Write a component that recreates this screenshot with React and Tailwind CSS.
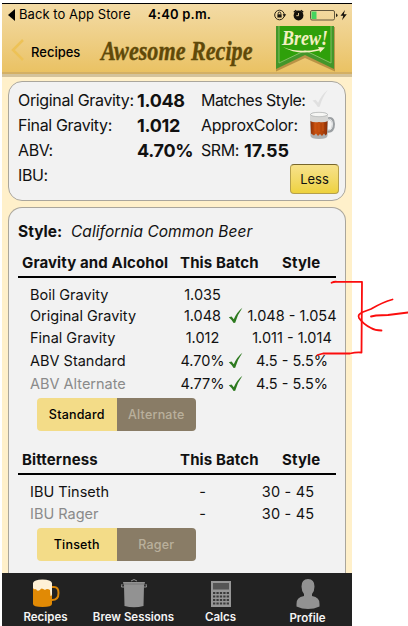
import React, { useState } from "react";

const gravityRows = [
  { name: "Boil Gravity", batch: "1.035", style: "", height: "h-[21px]" },
  { name: "Original Gravity", batch: "1.048", style: "1.048 - 1.054", check: true, height: "h-[21px]" },
  { name: "Final Gravity", batch: "1.012", style: "1.011 - 1.014", height: "h-[23px]" },
  { name: "ABV Standard", batch: "4.70%", style: "4.5 - 5.5%", check: true, height: "h-[23px]" },
  { name: "ABV Alternate", batch: "4.77%", style: "4.5 - 5.5%", check: true, muted: true, height: "h-[23px]" },
];

const bitternessRows = [
  { name: "IBU Tinseth", batch: "-", style: "30 - 45", narrow: true, height: "h-[22px]" },
  { name: "IBU Rager", batch: "-", style: "30 - 45", narrow: true, muted: true, height: "h-[21px]" },
];

const CheckMark = ({ className }) => (
  <svg viewBox="0 0 15 17" className={className} fill="currentColor">
    <path d="M0.8 10.2 L3.6 9.6 L5.8 12.2 Q9 5 14.4 0.8 Q9.500 7.500 7.200 15.800 L5.600 16 Q3.300 12.200 0.800 10.200Z" />
  </svg>
);

const BeerMug = () => (
  <svg viewBox="0 0 26 29" className="h-[29px] w-[26px]">
    <defs>
      <linearGradient id="beer" x1="0" x2="1" y1="0" y2="0">
        <stop offset="0" stopColor="#8f3208" />
        <stop offset="0.3" stopColor="#c9510f" />
        <stop offset="0.7" stopColor="#b2430a" />
        <stop offset="1" stopColor="#8a2f08" />
      </linearGradient>
    </defs>
    <path d="M18 8 Q24.500 6 24.500 13 Q24.500 21.500 18 20" fill="none" stroke="#9b9fa2" strokeWidth="3" />
    <path d="M18 8.500 Q23.500 7 23.500 13 Q23.500 20 18 19" fill="none" stroke="#e3e5e6" strokeWidth="1" />
    <path d="M1 3 L1.500 25 Q2 28 10 28 Q18 28 18.500 25 L19 3Z" fill="#aeb1b2" />
    <path d="M1.500 10 H18.500 L18 23 L16.500 24.500 L15 22.500 L13 25 L11 23 L9 25 L7 22.500 L5 24.500 L2 22.500Z" fill="url(#beer)" />
    <path d="M6 12 V20 M10 12 V21 M14 12 V20" stroke="#cf5a18" strokeWidth="0.8" />
    <path d="M1 4 Q1 1 10 1 Q19 1 19 4 V10 Q15 12 10 11 Q5 12 1 10Z" fill="#d6d6d4" />
    <ellipse cx="10" cy="3.500" rx="8.500" ry="2.200" fill="#f6f6f4" stroke="#a5a7a7" strokeWidth="0.600" />
  </svg>
);

const StatusIcons = () => (
  <svg viewBox="0 0 76 14" className="h-[14px] w-[76px]" fill="none">
    {/* rotation lock */}
    <circle cx="6.500" cy="7" r="4.800" stroke="#2b2415" strokeWidth="1" />
    <path d="M9.600 6.300 H13.200 L11.400 9Z" fill="#1b1710" />
    <rect x="4.400" y="6.300" width="4.200" height="3.200" fill="#1b1710" />
    <path d="M5.200 6.300 V5.300 Q5.200 4.100 6.500 4.100 Q7.800 4.100 7.800 5.300 V6.300" stroke="#1b1710" strokeWidth="0.900" />
    {/* alarm */}
    <circle cx="25.500" cy="7.500" r="4.900" fill="#14110c" />
    <path d="M20.800 4.200 L23.200 2.200 M30.200 4.200 L27.800 2.200" stroke="#14110c" strokeWidth="1.400" />
    <path d="M25.500 5 V7.700 H23.300" stroke="#f0d79c" strokeWidth="0.900" />
    {/* battery */}
    <rect x="37.500" y="2.500" width="24" height="9.500" rx="1.500" stroke="#61563c" strokeWidth="1" />
    <rect x="38.500" y="3.500" width="5" height="7.500" fill="#43d45f" />
    <path d="M63 5.500 Q64.500 5.500 64.500 7.200 Q64.500 9 63 9Z" fill="#2b2415" />
    <path d="M72 2 L67.500 7.800 H70.300 L69 12.200 L73.800 6.200 H70.800Z" fill="#14110c" />
  </svg>
);

const BrewRibbon = () => (
  <div className="relative h-[48px] w-[62px]">
    <svg viewBox="0 0 62 48" className="absolute inset-0 h-full w-full">
      <path d="M2 2 H61 V46.500 L31 33 L2 46.500Z" fill="#8f6a24" opacity="0.55" />
      <path d="M2 1 H60 V44 L31 30 L2 44Z" fill="#43962a" />
      <path d="M5 1 H57 V38 L31 25.500 L5 38Z" fill="#2fa00a" />
      <path d="M5 1 V38 L31 25.500 L57 38 V1" fill="none" stroke="#8cc46c" strokeWidth="0.900" />
      <path d="M9 22 Q25 28.500 45 24 L44 22 L51 22.500 L46 27.500 L45.500 25.500 Q24 31 9 22Z" fill="#f3f0c0" />
    </svg>
    <span className="absolute top-[2px] left-[8px] origin-left scale-x-[0.9] font-['Liberation_Serif',serif] text-[20px] leading-[22px] font-bold whitespace-nowrap text-[#f3f0c0] italic">
      Brew!
    </span>
  </div>
);

const Header = () => (
  <header className="h-[71px] border-t border-black border-b-2 border-b-[#d4b064] bg-linear-to-b from-[#f3dba5] to-[#eac263] text-black">
    <div className="flex h-[21px] items-center">
      <svg viewBox="0 0 7 12" className="ml-[6px] h-[12px] w-[7px]">
        <path d="M7 0 V12 L0 6Z" />
      </svg>
      <span className="ml-[4px] w-[129px] text-[13px] tracking-[0.05px]">Back to App Store</span>
      <span className="w-[125px] text-[13px] font-semibold tracking-[0.2px]">4:40 p.m.</span>
      <StatusIcons />
    </div>
    <div className="flex h-[47px] items-start">
      <svg viewBox="0 0 13 22" className="mt-[14px] ml-[9px] h-[22px] w-[13px]">
        <path d="M12 1 L2 11 L12 21" fill="none" stroke="#edc257" strokeWidth="2.500" />
      </svg>
      <span className="mt-[18px] ml-[7px] w-[70px] text-[13px] leading-[18px] font-medium">Recipes</span>
      <h1 className="mt-[9px] w-[173px] origin-left scale-x-[0.82] font-['Liberation_Serif',serif] text-[27px] leading-[34px] font-bold whitespace-nowrap text-[#604909] italic [-webkit-text-stroke:0.4px_#604909]">
        Awesome Recipe
      </h1>
      <BrewRibbon />
    </div>
  </header>
);

const Summary = () => (
  <section className="flex h-[120px] rounded-[14px] border border-[#aaa69c] bg-[#f2f2f2] pt-[6px] pl-[9px] text-[16px] leading-[25px] whitespace-nowrap">
    <div className="w-[119px] tracking-[-0.35px]">
      <div>Original Gravity:</div>
      <div>Final Gravity:</div>
      <div>ABV:</div>
      <div>IBU:</div>
    </div>
    <div className="w-[64px] text-[18px] font-bold tracking-[-0.3px]">
      <div>1.048</div>
      <div>1.012</div>
      <div>4.70%</div>
    </div>
    <div className="w-[137px]">
      <div className="flex h-[25px] items-center">
        <span className="w-[110px] tracking-[-0.55px]">Matches Style:</span>
        <CheckMark className="mb-1 h-[19px] w-[18px] text-[#e0e0e0]" />
      </div>
      <div className="flex h-[25px] items-center">
        <span className="w-[108px] tracking-[-0.25px]">ApproxColor:</span>
        <BeerMug />
      </div>
      <div className="flex items-center">
        <span className="w-[43px] tracking-[-0.4px]">SRM:</span>
        <span className="text-[18px] font-bold">17.55</span>
      </div>
      <button className="mt-[1px] ml-[89px] block h-[30px] w-[49px] rounded-[4px] border border-[#b5a04d] border-t-[#77662c] bg-linear-to-b from-[#f7e28a] to-[#eed23c] text-[13px] leading-[28px]">
        Less
      </button>
    </div>
  </section>
);

const TableHead = ({ title }) => (
  <div className="flex h-[28px] w-[318px] items-center border-b-2 border-black pl-[4px] text-[15px] font-bold tracking-[0.12px]">
    <span className="w-[158px]">{title}</span>
    <span className="w-[102px]">This Batch</span>
    <span>Style</span>
  </div>
);

const TableRow = ({ row }) => (
  <div className={`flex items-center text-[14.5px] ${row.height}`}>
    <span className={`w-[144px] pl-[12px] ${row.muted ? "text-[#8a8a8a]" : ""}`}>{row.name}</span>
    <span className="w-[81px] text-center">{row.batch}</span>
    <span className="-ml-[15px] w-[19px]">
      {row.check && <CheckMark className="h-[17px] w-[15px] text-[#2d7a1f]" />}
    </span>
    <span className={`text-center ${row.narrow ? "w-[82px] tracking-[0.2px]" : "w-[90px]"}`}>{row.style}</span>
  </div>
);

const Toggle = ({ options }) => {
  const [selected, setSelected] = useState(options[0]);
  return (
    <div className="ml-[19px] flex h-[33px] w-[159px] overflow-hidden rounded-[4px] text-[12.5px] font-medium tracking-[0.2px]">
      {options.map((option) => (
        <button
          key={option}
          onClick={() => setSelected(option)}
          className={`w-1/2 pt-[2px] ${selected === option ? "bg-[#f3dc88] text-black" : "bg-[#897c66] text-[#b9b09c]"}`}
        >
          {option}
        </button>
      ))}
    </div>
  );
};

const Details = () => (
  <section className="mt-[6px] h-[367px] rounded-t-[14px] border border-b-0 border-[#aaa69c] bg-[#f2f2f2] pt-[12px] pl-[9px] whitespace-nowrap">
    <div className="flex h-[23px] items-center text-[15.5px]">
      <span className="w-[53px] font-bold">Style:</span>
      <span className="tracking-[0.05px] italic">California Common Beer</span>
    </div>
    <div className="h-[7px]" />
    <TableHead title="Gravity and Alcohol" />
    <div className="pt-[6px] pb-[1px]">
      {gravityRows.map((row) => <TableRow key={row.name} row={row} />)}
    </div>
    <div className="pt-[2px]">
      <Toggle options={["Standard", "Alternate"]} />
    </div>
    <div className="h-[16px]" />
    <TableHead title="Bitterness" />
    <div className="pt-[6px] pb-[4px]">
      {bitternessRows.map((row) => <TableRow key={row.name} row={row} />)}
    </div>
    <Toggle options={["Tinseth", "Rager"]} />
  </section>
);

const tabs = [
  {
    label: "Recipes",
    width: "w-[87px]",
    icon: (
      <svg viewBox="0 0 28 29" className="h-[29px] w-[28px]">
        <path d="M20 8 H22 Q26.500 8 26.500 14 Q26.500 21 20 21" fill="none" stroke="#dc8606" strokeWidth="2" />
        <path d="M1 4 H20 V25 Q20 28 10.500 28 Q1 28 1 25Z" fill="#e18a05" />
        <path d="M1 4 Q2 0.500 10.500 0.500 Q19 0.500 20 4 V15 Q20 17 18.500 17 L18 11 Q15 9 13 11 Q9 8 8 11 Q5 13 4 10 Q2 11 1 9Z" fill="#fff1d6" />
      </svg>
    ),
  },
  {
    label: "Brew Sessions",
    width: "w-[89px]",
    icon: (
      <svg viewBox="0 0 28 29" className="h-[29px] w-[28px]" fill="#929292">
        <path d="M3 3 H25 L24 7 L23.500 27 Q14 29.500 4.500 27 L4 7Z" />
        <path d="M4 8 H1.500 L2 5 M24 8 H26.500 L26 5 M11 2 Q14 -1 17 2" fill="none" stroke="#929292" />
        <path d="M3 5 H25" stroke="#666" strokeWidth="0.600" />
      </svg>
    ),
  },
  {
    label: "Calcs",
    width: "w-[85px]",
    icon: (
      <svg viewBox="0 0 20 26" className="h-[26px] w-[20px]">
        <path d="M0 0 H20 V26 H0Z" fill="#969696" />
        <path d="M2 2 H18 V8.500 H2Z" fill="#555" />
        <path d="M2 12 H18 M2 15.500 H18 M2 19 H18 M2 22.500 H18" stroke="#3a3a3a" strokeWidth="2.200" strokeDasharray="2.300 1.120" />
      </svg>
    ),
  },
  {
    label: "Profile",
    width: "w-[89px]",
    icon: (
      <svg viewBox="0 0 24 30" className="h-[30px] w-[24px]" fill="#929292">
        <path d="M12 0 Q18.500 0 18.500 7.500 Q18.500 12 16 15 V17 Q24 18.500 23.500 25 V27.500 Q18 30 12 30 Q6 30 0.500 27.500 V25 Q0 18.500 8 17 V15 Q5.500 12 5.500 7.500 Q5.500 0 12 0Z" />
      </svg>
    ),
  },
];

const TabBar = () => (
  <nav className="flex h-[53px] bg-[#222] text-[#f4f4f4]">
    {tabs.map((tab) => (
      <button key={tab.label} className={`flex flex-col items-center ${tab.width}`}>
        <span className="mt-[6px] flex h-[30px] items-center">{tab.icon}</span>
        <span className="mt-px text-[11.5px] leading-[17px] font-semibold whitespace-nowrap">{tab.label}</span>
      </button>
    ))}
  </nav>
);

// red pen marks drawn over the table
const Annotation = () => (
  <svg viewBox="0 0 100 90" className="absolute top-[270px] left-[308px] h-[90px] w-[100px]" fill="none" stroke="#fb0d0d" strokeWidth="1.800" strokeLinecap="round" strokeLinejoin="round">
    <path d="M23.500 12.700 Q26 11.500 29 11.800 H54 L53.500 82.500 Q48 82 42 83.500 L15 83.500 L9.500 85" />
    <path d="M84.500 29.500 Q75 32 63 39 L55 42 Q49 44.500 51 48 Q55 54 63 58 Q67 60.500 73.500 60.500" />
    <path d="M63 46.500 L68 45.500 L80 45 L100 42.500" />
  </svg>
);

const App = () => {
  return (
    <div className="relative h-[626px] w-[408px] overflow-hidden bg-white font-[Inter,sans-serif] text-[#111]">
      <div className="ml-[2px] w-[350px] pt-[3px]">
        <Header />
        <main className="h-[499px] border-t-[3px] border-[#d4c39c] bg-[#fff0ca] px-[6px] pt-[4px]">
          <Summary />
          <Details />
        </main>
        <TabBar />
      </div>
      <Annotation />
    </div>
  );
};

export default App;
